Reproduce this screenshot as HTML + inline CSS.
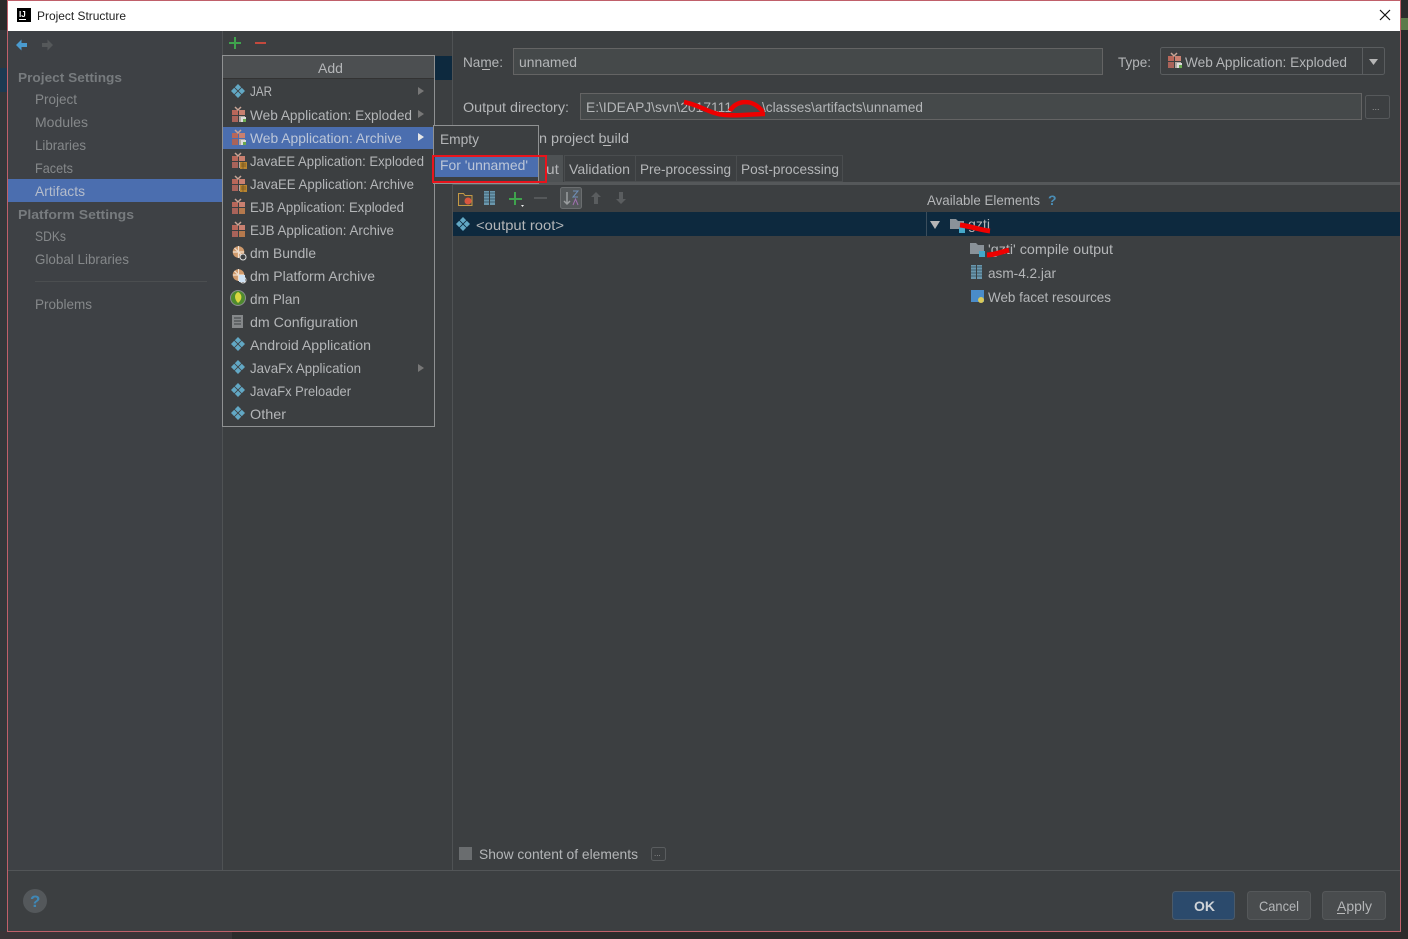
<!DOCTYPE html>
<html><head><meta charset="utf-8"><title>Project Structure</title>
<style>
html,body{margin:0;padding:0;background:#2b2b2b;overflow:hidden}
svg{display:block}
text{font-family:"Liberation Sans",sans-serif;font-size:14px;fill:#b4b6b8}
.d{fill:#85888a}
.h{font-weight:bold;fill:#777b7e}
</style></head><body>
<svg width="1408" height="939" viewBox="0 0 1408 939" xmlns="http://www.w3.org/2000/svg">
<defs>
<g id="dia" fill="#62a8c4"><path d="M7 0l3.200 3.200L7 6.400 3.800 3.200z"/><path d="M3.200 3.800L6.400 7l-3.200 3.200L0 7z"/><path d="M10.800 3.800L14 7l-3.200 3.200L7.600 7z"/><path d="M7 7.600l3.200 3.200L7 14l-3.200-3.200z"/></g>
<g id="web"><rect x="1" y="3" width="6" height="5" fill="#b8675a"/><rect x="8" y="3" width="6" height="5" fill="#c98070"/><rect x="1" y="9" width="6" height="6" fill="#a9635a"/><rect x="8" y="9" width="6" height="6" fill="#b5a9a2"/><path d="M4 0l3 3 3-3" fill="none" stroke="#c9a596" stroke-width="1.500"/><rect x="10" y="10" width="5" height="5" fill="#dcdcdc"/><rect x="12" y="12" width="3" height="3" fill="#69a84f"/></g>
<g id="jee"><rect x="1" y="3" width="6" height="5" fill="#b8675a"/><rect x="8" y="3" width="6" height="5" fill="#c98070"/><rect x="1" y="9" width="6" height="6" fill="#a9635a"/><rect x="8" y="9" width="6" height="6" fill="#b5a9a2"/><path d="M4 0l3 3 3-3" fill="none" stroke="#c9a596" stroke-width="1.500"/><rect x="9" y="9" width="7" height="7" fill="#b8842f"/><path d="M10 11h5M10 13h5M12 9v7" stroke="#6e5220" stroke-width=".7"/></g>
<g id="ejb"><rect x="1" y="3" width="6" height="5" fill="#b8675a"/><rect x="8" y="3" width="6" height="5" fill="#c98070"/><rect x="1" y="9" width="6" height="6" fill="#a9635a"/><rect x="8" y="9" width="6" height="6" fill="#b5794d"/><path d="M4 0l3 3 3-3" fill="none" stroke="#c9a596" stroke-width="1.500"/></g>
<g id="dm"><circle cx="6.500" cy="6" r="5.800" fill="#cf9a6c"/><path d="M1 6h11M6.500 0v12M2.500 2l8 8" stroke="#f0e0cf" stroke-width="1.200"/><circle cx="11" cy="11" r="3" fill="#3c3f41" stroke="#dcdcdc"/></g>
<g id="jar"><rect width="11" height="14" fill="#6a97ad"/><path d="M0 2h11M0 5h11M0 8h11M0 11h11" stroke="#3f5f70"/><rect x="5" width="1" height="14" fill="#3c3f41"/></g>
</defs>

<!-- outer -->
<rect width="1408" height="939" fill="#2b2b2b"/>
<rect x="0" y="931" width="232" height="8" fill="#3a3437"/>
<rect x="0" y="30" width="8" height="901" fill="#34373a"/>
<rect x="0" y="68" width="7" height="24" fill="#1d3a52"/>
<rect x="1401" y="18" width="7" height="12" fill="#5b7a4a"/>
<!-- window -->
<rect x="7.500" y="0.500" width="1393" height="931" fill="#3c3f41" stroke="#c0606a"/>
<rect x="8" y="1" width="1392" height="30" fill="#ffffff"/>
<rect x="17" y="8" width="14" height="14" fill="#000"/>
<text x="19" y="17" style="font-size:8px;font-weight:bold;fill:#fff">IJ</text>
<rect x="19" y="19" width="7" height="1" fill="#fff"/>
<text x="37" y="20" textLength="89" lengthAdjust="spacingAndGlyphs" style="font-size:12px;fill:#222">Project Structure</text>
<path d="M1380 10l10 10M1390 10l-10 10" stroke="#111" stroke-width="1.200"/>

<!-- sidebar -->
<rect x="8" y="31" width="214" height="839" fill="#3e4145"/>
<rect x="222" y="31" width="1" height="839" fill="#4f5254"/>
<rect x="452" y="31" width="1" height="839" fill="#4f5254"/>
<rect x="8" y="870" width="1392" height="1" fill="#525557"/>
<path d="M16 45l5.500-5.500v3.500h5.500v4h-5.500v3.500z" fill="#4a9bd0"/>
<path d="M53 45l-5.500-5.500v3.500h-5.500v4h5.500v3.500z" fill="#55585a"/>
<text x="18" y="82" class="h" textLength="104" lengthAdjust="spacingAndGlyphs" style="font-size:13px">Project Settings</text>
<text x="35" y="104" class="d" textLength="42" lengthAdjust="spacingAndGlyphs">Project</text>
<text x="35" y="127" class="d" textLength="53" lengthAdjust="spacingAndGlyphs">Modules</text>
<text x="35" y="150" class="d" textLength="51" lengthAdjust="spacingAndGlyphs">Libraries</text>
<text x="35" y="173" class="d" textLength="38" lengthAdjust="spacingAndGlyphs">Facets</text>
<rect x="8" y="179" width="214" height="23" fill="#4b6eaf"/>
<text x="35" y="196" textLength="50" lengthAdjust="spacingAndGlyphs" style="fill:#b4bccb">Artifacts</text>
<text x="18" y="219" class="h" textLength="116" lengthAdjust="spacingAndGlyphs" style="font-size:13px">Platform Settings</text>
<text x="35" y="241" class="d" textLength="31" lengthAdjust="spacingAndGlyphs">SDKs</text>
<text x="35" y="264" class="d" textLength="94" lengthAdjust="spacingAndGlyphs">Global Libraries</text>
<rect x="35" y="281" width="172" height="1" fill="#4b4e50"/>
<text x="35" y="309" class="d" textLength="57" lengthAdjust="spacingAndGlyphs">Problems</text>

<!-- plus/minus -->
<path d="M235 37v12M229 43h12" stroke="#3fa34d" stroke-width="2"/>
<path d="M255 43h11" stroke="#c4493d" stroke-width="2"/>
<rect x="435" y="56" width="17" height="24" fill="#0d293e"/>

<!-- right panel -->
<text x="463" y="67" textLength="40" lengthAdjust="spacingAndGlyphs">Name:</text>
<rect x="482" y="69" width="8" height="1" fill="#bbb"/>
<rect x="513.500" y="48.500" width="589" height="26" fill="#45494a" stroke="#646464"/>
<text x="519" y="67" textLength="58" lengthAdjust="spacingAndGlyphs">unnamed</text>
<text x="1118" y="67" textLength="33" lengthAdjust="spacingAndGlyphs">Type:</text>
<rect x="1160.500" y="47.500" width="224" height="27" rx="2" fill="#3c3f41" stroke="#5a5d5f"/>
<rect x="1362" y="48" width="1" height="26" fill="#5a5d5f"/>
<use href="#web" x="1167" y="53"/>
<text x="1185" y="67" textLength="162" lengthAdjust="spacingAndGlyphs">Web Application: Exploded</text>
<path d="M1369 59h9l-4.500 6z" fill="#b5b5b5"/>
<text x="463" y="112" textLength="106" lengthAdjust="spacingAndGlyphs">Output directory:</text>
<rect x="580.500" y="93.500" width="781" height="26" fill="#45494a" stroke="#646464"/>
<text x="586" y="112" textLength="146" lengthAdjust="spacingAndGlyphs">E:\IDEAPJ\svn\2017111</text>
<text x="762" y="112" textLength="161" lengthAdjust="spacingAndGlyphs">\classes\artifacts\unnamed</text>
<path d="M684 102C700 105 710 114 725 115C740 116 752 114 765 114M730 111C735 101 752 97 763 112" fill="none" stroke="#ee0000" stroke-width="4.500"/>
<rect x="1365.500" y="95.500" width="24" height="23" rx="2" fill="#3c3f41" stroke="#56595b"/>
<text x="1372" y="110" style="font-size:9px;fill:#999">...</text>
<text x="539" y="143" textLength="90" lengthAdjust="spacingAndGlyphs">n project build</text>
<rect x="603" y="145" width="8" height="1" fill="#bbb"/>

<!-- tabs -->
<rect x="539" y="155" width="24" height="27" fill="#4e5254"/>
<text x="546" y="174" textLength="13" lengthAdjust="spacingAndGlyphs">ut</text>
<rect x="564.500" y="155.500" width="71" height="26" fill="#3c3f41" stroke="#4a4d4f"/>
<text x="569" y="174" textLength="61" lengthAdjust="spacingAndGlyphs">Validation</text>
<rect x="635.500" y="155.500" width="101" height="26" fill="#3c3f41" stroke="#4a4d4f"/>
<text x="640" y="174" textLength="91" lengthAdjust="spacingAndGlyphs">Pre-processing</text>
<rect x="736.500" y="155.500" width="106" height="26" fill="#3c3f41" stroke="#4a4d4f"/>
<text x="741" y="174" textLength="98" lengthAdjust="spacingAndGlyphs">Post-processing</text>
<rect x="453" y="182" width="947" height="3" fill="#55585a"/>

<!-- toolbar -->
<path d="M458.500 193.500h5l1.500 2h7v10h-13.500z" fill="#4a4540" stroke="#c49a45"/>
<circle cx="468" cy="201" r="3.500" fill="#d9563f"/>
<use href="#jar" x="484" y="191"/>
<path d="M515 192v13M509 199h13" stroke="#3fa34d" stroke-width="2"/>
<path d="M521 205h3l-1.500 2z" fill="#eee"/>
<path d="M534 198h13" stroke="#55585a" stroke-width="2"/>
<rect x="560.500" y="187.500" width="21" height="21" rx="2" fill="#54585a" stroke="#6a6d6f"/>
<path d="M567 192v12M564 201l3 3 3-3" fill="none" stroke="#9a9d9f" stroke-width="1.500"/>
<path d="M573 191h5l-5 6h5" fill="none" stroke="#6f8fb8"/>
<path d="M573 205l2.500-6 2.500 6" fill="none" stroke="#a070b0"/>
<path d="M596 192l5 5h-3v7h-4v-7h-3z" fill="#5a5d5f"/>
<path d="M621 204l5-5h-3v-7h-4v7h-3z" fill="#5a5d5f"/>

<!-- rows -->
<rect x="453" y="212" width="947" height="24" fill="#0d293e"/>
<rect x="926" y="212" width="1" height="24" fill="#3a4d5c"/>
<use href="#dia" x="456" y="217"/>
<text x="476" y="230" textLength="88" lengthAdjust="spacingAndGlyphs">&lt;output root&gt;</text>
<text x="927" y="205" textLength="113" lengthAdjust="spacingAndGlyphs">Available Elements</text>
<text x="1048" y="205" style="font-weight:bold;fill:#4a8db5">?</text>
<path d="M930 221h10l-5 8z" fill="#b5b5b5"/>
<path d="M950 219h6l2 2h6v8h-14z" fill="#8a9299"/>
<rect x="959" y="227" width="6" height="6" fill="#45a8c9"/>
<text x="968" y="229" textLength="22" lengthAdjust="spacingAndGlyphs">gzti</text>
<path d="M960 225c10 1 20 5 30 6" fill="none" stroke="#ee0000" stroke-width="5"/>
<path d="M970 243h6l2 2h6v9h-14z" fill="#8a9299"/>
<rect x="979" y="251" width="6" height="6" fill="#45a8c9"/>
<text x="988" y="254" textLength="125" lengthAdjust="spacingAndGlyphs">'gzti' compile output</text>
<path d="M987 255c8 0 14-3 22-5" fill="none" stroke="#ee0000" stroke-width="5"/>
<use href="#jar" x="971" y="265"/>
<text x="988" y="278" textLength="68" lengthAdjust="spacingAndGlyphs">asm-4.2.jar</text>
<rect x="971" y="290" width="13" height="12" fill="#4a8cc9"/>
<circle cx="981" cy="300" r="3" fill="#d9c95a"/>
<text x="988" y="302" textLength="123" lengthAdjust="spacingAndGlyphs">Web facet resources</text>

<!-- bottom of panel -->
<rect x="459" y="847" width="13" height="13" fill="#6a6d6f"/>
<text x="479" y="859" textLength="159" lengthAdjust="spacingAndGlyphs">Show content of elements</text>
<rect x="651.500" y="847.500" width="14" height="13" rx="2" fill="#3c3f41" stroke="#5a5d5f"/>
<text x="654" y="856" style="font-size:8px;fill:#999">...</text>

<!-- footer -->
<ellipse cx="35" cy="901" rx="12" ry="12" fill="#54585b"/>
<text x="30" y="907" style="font-size:17px;font-weight:bold;fill:#3f87b5">?</text>
<rect x="1172.500" y="891.500" width="62" height="28" rx="3" fill="#2b4a6c" stroke="#4a5a6a"/>
<text x="1194" y="911" textLength="21" lengthAdjust="spacingAndGlyphs" style="font-weight:bold;fill:#d0d4d8">OK</text>
<rect x="1247.500" y="891.500" width="63" height="28" rx="3" fill="#494c4e" stroke="#55585a"/>
<text x="1259" y="911" textLength="40" lengthAdjust="spacingAndGlyphs">Cancel</text>
<rect x="1322.500" y="891.500" width="63" height="28" rx="3" fill="#494c4e" stroke="#55585a"/>
<text x="1337" y="911" textLength="35" lengthAdjust="spacingAndGlyphs">Apply</text>
<rect x="1337" y="913" width="8" height="1" fill="#bbb"/>

<!-- Add popup -->
<rect x="222.500" y="55.500" width="212" height="371" fill="#3c3f41" stroke="#8f9192"/>
<rect x="223" y="56" width="211" height="22" fill="#4c4f51"/>
<rect x="223" y="78" width="211" height="1" fill="#333"/>
<text x="318" y="73" textLength="25" lengthAdjust="spacingAndGlyphs">Add</text>
<rect x="223" y="127" width="211" height="22" fill="#4b6eaf"/>

<use href="#dia" x="231" y="84"/><text x="250" y="96" textLength="22" lengthAdjust="spacingAndGlyphs">JAR</text>
<path d="M418 87l6 4-6 4z" fill="#777"/>
<use href="#web" x="231" y="107"/><text x="250" y="120" textLength="162" lengthAdjust="spacingAndGlyphs">Web Application: Exploded</text>
<path d="M418 110l6 4-6 4z" fill="#777"/>
<use href="#web" x="231" y="130"/><text x="250" y="143" textLength="152" lengthAdjust="spacingAndGlyphs" style="fill:#bcc6d8">Web Application: Archive</text>
<path d="M418 133l6 4-6 4z" fill="#e6e6e6"/>
<use href="#jee" x="231" y="153"/><text x="250" y="166" textLength="174" lengthAdjust="spacingAndGlyphs">JavaEE Application: Exploded</text>
<use href="#jee" x="231" y="176"/><text x="250" y="189" textLength="164" lengthAdjust="spacingAndGlyphs">JavaEE Application: Archive</text>
<use href="#ejb" x="231" y="199"/><text x="250" y="212" textLength="154" lengthAdjust="spacingAndGlyphs">EJB Application: Exploded</text>
<use href="#ejb" x="231" y="222"/><text x="250" y="235" textLength="144" lengthAdjust="spacingAndGlyphs">EJB Application: Archive</text>
<use href="#dm" x="232" y="246"/><text x="250" y="258" textLength="66" lengthAdjust="spacingAndGlyphs">dm Bundle</text>
<use href="#dm" x="232" y="269"/><rect x="239" y="275" width="6" height="7" fill="#cfe3f5"/><text x="250" y="281" textLength="125" lengthAdjust="spacingAndGlyphs">dm Platform Archive</text>
<circle cx="238" cy="298" r="7.500" fill="#4f8a2f"/><circle cx="238" cy="298" r="7.500" fill="none" stroke="#8a8d8f"/><path d="M238 292c4 2 5 7 0 11-4-4-4-9 0-11z" fill="#d9d640"/><text x="250" y="304" textLength="50" lengthAdjust="spacingAndGlyphs">dm Plan</text>
<rect x="232" y="315" width="11" height="13" fill="#85888a"/><path d="M234 318h7M234 321h7M234 324h7" stroke="#3c3f41"/><text x="250" y="327" textLength="108" lengthAdjust="spacingAndGlyphs">dm Configuration</text>
<use href="#dia" x="231" y="337"/><text x="250" y="350" textLength="121" lengthAdjust="spacingAndGlyphs">Android Application</text>
<use href="#dia" x="231" y="360"/><text x="250" y="373" textLength="111" lengthAdjust="spacingAndGlyphs">JavaFx Application</text>
<path d="M418 364l6 4-6 4z" fill="#777"/>
<use href="#dia" x="231" y="383"/><text x="250" y="396" textLength="101" lengthAdjust="spacingAndGlyphs">JavaFx Preloader</text>
<use href="#dia" x="231" y="406"/><text x="250" y="419" textLength="36" lengthAdjust="spacingAndGlyphs">Other</text>

<!-- submenu -->
<rect x="433.500" y="125.500" width="105" height="58" fill="#3c3f41" stroke="#8f9192"/>
<rect x="435" y="155" width="103" height="22" fill="#4b6eaf"/>
<text x="440" y="144" textLength="39" lengthAdjust="spacingAndGlyphs">Empty</text>
<text x="440" y="170" textLength="88" lengthAdjust="spacingAndGlyphs" style="fill:#bcc6d8">For 'unnamed'</text>
<rect x="433" y="156" width="113" height="26" fill="none" stroke="#e8141c" stroke-width="2"/>
</svg>
</body></html>
